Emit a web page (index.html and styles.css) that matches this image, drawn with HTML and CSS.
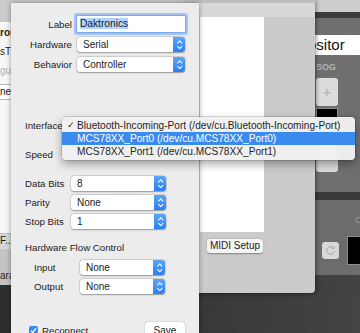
FILE: index.html
```html
<!DOCTYPE html>
<html lang="en">
<head>
<meta charset="UTF-8">
<meta name="viewport" content="width=device-width, initial-scale=1.0">
<link rel="stylesheet" href="styles.css">
<title>Serial Device</title>
</head>
<body>

<div class="desktop">

  <!-- window behind, on the left -->
  <div class="win-left">
    <div class="wl-title"></div>
    <div class="wl-body">
      <div class="wl-line bold">ron</div>
      <div class="wl-line">sTV</div>
      <div class="wl-line dim">gur</div>
      <div class="wl-line boxed">nec</div>
    </div>
    <div class="wl-status">F...</div>
    <div class="wl-foot">ara</div>
  </div>

  <!-- dark app window on the right -->
  <div class="win-right">
    <div class="wr-title"></div>
    <div class="wr-band"></div>
    <div class="wr-top">
      <div class="wr-field">Compositor</div>
      <div class="wr-col">
        <div class="wr-label">SOG</div>
        <div class="wr-btn">+</div>
        <div class="wr-black"></div>
        <div class="wr-btn tall"></div>
      </div>
    </div>
    <div class="wr-band low"></div>
    <div class="wr-bottom">
      <div class="wr-tag">C</div>
      <div class="wr-row">
        <div class="wr-refresh">
          <svg width="11" height="11" viewBox="0 0 11 11"><path d="M8.6 3.2A3.8 3.8 0 1 0 9.3 6" fill="none" stroke="#a9a9a9" stroke-width="1"/><path d="M6.8 3.4 L9 3.4 L9 1.2" fill="none" stroke="#a9a9a9" stroke-width="1"/></svg>
        </div>
        <div class="wr-screen"></div>
      </div>
    </div>
  </div>

  <!-- middle window -->
  <div class="win-mid">
    <div class="wm-top"></div>
    <div class="wm-title"></div>
    <div class="wm-body">
      <div class="wm-list"></div>
      <button class="mac-btn midi">MIDI Setup</button>
    </div>
  </div>

  <!-- the sheet -->
  <div class="sheet">
    <div class="form-top">
      <label>Label</label>
      <div class="textfield"><span class="sel">Daktronics</span></div>
      <label>Hardware</label>
      <div class="popup">Serial<span class="stepper"></span></div>
      <label>Behavior</label>
      <div class="popup">Controller<span class="stepper"></span></div>
    </div>

    <div class="form-port">
      <label>Interface</label>
      <div></div>
      <label>Speed</label>
      <div></div>
    </div>

    <div class="form-bits">
      <label>Data Bits</label>
      <div class="popup">8<span class="stepper"></span></div>
      <label>Parity</label>
      <div class="popup">None<span class="stepper"></span></div>
      <label>Stop Bits</label>
      <div class="popup">1<span class="stepper"></span></div>
    </div>

    <div class="group-title">Hardware Flow Control</div>
    <div class="form-flow">
      <label>Input</label>
      <div class="popup">None<span class="stepper"></span></div>
      <label>Output</label>
      <div class="popup">None<span class="stepper"></span></div>
    </div>

    <div class="sheet-foot">
      <div class="check-row">
        <span class="checkbox">
          <svg width="9" height="9" viewBox="0 0 9 9"><path d="M2 4.6 L3.8 6.6 L7 2.2" fill="none" stroke="#fff" stroke-width="1.3"/></svg>
        </span>
        Reconnect
      </div>
      <button class="mac-btn save">Save</button>
    </div>
  </div>

  <!-- open popup menu -->
  <div class="menu">
    <div class="menu-item"><span class="tick">&#10003;</span>Bluetooth-Incoming-Port (/dev/cu.Bluetooth-Incoming-Port)</div>
    <div class="menu-item active">MCS78XX_Port0 (/dev/cu.MCS78XX_Port0)</div>
    <div class="menu-item">MCS78XX_Port1 (/dev/cu.MCS78XX_Port1)</div>
  </div>

</div>

</body>
</html>
```

FILE: styles.css
```css
body {
  margin: 0;
  font-family: "Liberation Sans", Arial, sans-serif;
  color: #222;
}
.desktop {
  position: relative;
  width: 360px;
  height: 333px;
  overflow: hidden;
  background: linear-gradient(100deg, #2c2c2c 0%, #363636 55%, #444 100%);
}

/* left window */
.win-left {
  position: absolute;
  left: 0;
  top: 0;
  width: 190px;
  height: 285px;
  background: #c6c6c6;
}
.wl-title {
  height: 22px;
  background: #cbcbcb;
}
.wl-body {
  height: 211px;
  background: #f7f7f7;
  padding-top: 5px;
  box-sizing: border-box;
}
.wl-line {
  font-size: 10px;
  line-height: 12px;
  margin-bottom: 7px;
}
.wl-line.bold {
  font-weight: bold;
}
.wl-line.dim {
  color: #b0b0b0;
}
.wl-line.boxed {
  width: 30px;
  padding: 1px 0;
  background: #fff;
  border: 1px solid #b9b9b9;
  border-left: none;
  border-radius: 0 3px 3px 0;
}
.wl-status {
  height: 15px;
  background: #d6d6d6;
  border-top: 1px solid #bdbdbd;
  font-size: 10px;
  line-height: 14px;
}
.wl-foot {
  height: 36px;
  background: #c4c4c4;
  font-size: 10px;
  padding-top: 21px;
  box-sizing: border-box;
}

/* right window */
.win-right {
  position: absolute;
  left: 262px;
  top: 0;
  width: 120px;
  height: 275px;
  background: #707070;
}
.wr-title {
  height: 12px;
  background: #cdcdcd;
}
.wr-band {
  height: 6px;
  background: #3a3a3a;
}
.wr-band.low {
  height: 8px;
}
.wr-top {
  height: 174px;
  padding-top: 17px;
  box-sizing: border-box;
  background: #6f6f6f;
}
.wr-field {
  height: 20px;
  background: #fff;
  font-size: 15px;
  line-height: 20px;
  padding-left: 6px;
  color: #111;
}
.wr-col {
  margin-left: 54px;
  width: 22px;
}
.wr-label {
  margin-top: 7px;
  font-size: 9px;
  font-weight: bold;
  line-height: 10px;
  color: #b4b4b4;
}
.wr-btn {
  margin-top: 6px;
  height: 28px;
  background: #dcdcdc;
  border-radius: 3px;
  color: #b2b2b2;
  font-size: 15px;
  line-height: 27px;
  text-align: center;
}
.wr-btn.tall {
  margin-top: 2px;
  height: 42px;
}
.wr-black {
  margin-top: 2px;
  height: 20px;
  background: #000;
  border: 1px solid #8a8a8a;
  box-sizing: border-box;
}
.wr-bottom {
  height: 75px;
  background: #6c6c6c;
}
.wr-tag {
  margin-left: 93px;
  padding-top: 15px;
  font-size: 9px;
  line-height: 10px;
  color: #9a9a9a;
}
.wr-row {
  display: flex;
  align-items: center;
  gap: 8px;
  margin: 11px 0 0 60px;
}
.wr-refresh {
  width: 17px;
  height: 17px;
  background: #d8d8d8;
  border-radius: 3px;
  display: flex;
  align-items: center;
  justify-content: center;
}
.wr-screen {
  width: 30px;
  height: 29px;
  background: #000;
  border: 1px solid #8c8c8c;
  box-sizing: border-box;
}

/* middle window */
.win-mid {
  position: absolute;
  left: 185px;
  top: 0;
  width: 130px;
  height: 293px;
  background: #cbcbcb;
  border-radius: 0 0 4px 4px;
  box-shadow: 1px 1px 4px rgba(0, 0, 0, 0.45);
}
.wm-top {
  height: 3px;
  background: #bdbdbd;
}
.wm-title {
  height: 14px;
  background: #d8d8d8;
}
.wm-body {
  padding-left: 15px;
}
.wm-list {
  width: 64px;
  height: 215px;
  background: #fff;
}

.mac-btn {
  display: block;
  padding: 0;
  border: none;
  background: #f6f6f6;
  border-radius: 3px;
  box-shadow: 0 0.5px 1.5px rgba(0, 0, 0, 0.35);
  font-family: "Liberation Sans", Arial, sans-serif;
  font-size: 10px;
  color: #222;
}
.midi {
  margin: 7px 0 0 7px;
  width: 56px;
  height: 14px;
  line-height: 14px;
}

/* sheet */
.sheet {
  position: absolute;
  left: 11px;
  top: 3px;
  width: 188px;
  height: 340px;
  background: #ececec;
  box-shadow: 0 0 5px rgba(0, 0, 0, 0.4);
  font-size: 9.7px;
}
.sheet label {
  display: flex;
  align-items: center;
}
.form-top {
  display: grid;
  grid-template-columns: 61px 108px;
  grid-template-rows: 16px 15px 15px;
  column-gap: 5px;
  row-gap: 5px;
  padding-top: 13px;
}
.form-top label {
  justify-content: flex-end;
}
.form-port,
.form-bits,
.form-flow {
  display: grid;
  grid-template-columns: 46px 95px;
  grid-auto-rows: 15px;
  padding-left: 14px;
}
.form-port {
  margin-top: 46px;
  row-gap: 14px;
}
.form-bits {
  margin-top: 14px;
  row-gap: 4px;
}
.form-flow {
  grid-template-columns: 46px 85px;
  margin-top: 6px;
  padding-left: 23px;
  row-gap: 4px;
}
.group-title {
  margin: 13px 0 0 14px;
  line-height: 12px;
}

.textfield {
  background: #fff;
  box-shadow: 0 0 0 1px #7aaaf0, 0 0 0 3px rgba(110, 160, 240, 0.55);
  border-radius: 1px;
  font-size: 10.2px;
  line-height: 16px;
  padding-left: 3px;
}
.sel {
  background: #b3d4fc;
}
.popup {
  position: relative;
  background: #fff;
  border-radius: 3px;
  box-shadow: 0 0 0 0.5px rgba(0, 0, 0, 0.15), 0 0.5px 1.5px rgba(0, 0, 0, 0.3);
  font-size: 10px;
  line-height: 15px;
  padding-left: 6px;
}
.stepper {
  position: absolute;
  right: 0;
  top: 0;
  width: 12px;
  height: 100%;
  border-radius: 0 3px 3px 0;
  background: linear-gradient(#5ca6f8, #2c7ef0);
}
.stepper::before,
.stepper::after {
  content: "";
  position: absolute;
  left: 4.5px;
  width: 2.5px;
  height: 2.5px;
  border-left: 1px solid #fff;
  border-top: 1px solid #fff;
}
.stepper::before {
  top: 4px;
  transform: rotate(45deg);
}
.stepper::after {
  top: 7.5px;
  transform: rotate(225deg);
}

.sheet-foot {
  display: flex;
  justify-content: space-between;
  align-items: flex-start;
  width: 156px;
  margin: 28px 0 0 18px;
}
.check-row {
  display: flex;
  align-items: center;
  gap: 4px;
  margin-top: 3px;
  font-size: 9.7px;
}
.checkbox {
  width: 9px;
  height: 9px;
  border-radius: 2px;
  background: #3b8bef;
  display: flex;
}
.save {
  width: 40px;
  height: 17px;
  background: #fff;
  border-radius: 4px;
  font-size: 10px;
}

/* open menu */
.menu {
  position: absolute;
  left: 62px;
  top: 117px;
  width: 293px;
  padding: 2px 0;
  background: rgba(240, 240, 240, 0.98);
  border-radius: 4px;
  box-shadow: 0 0 0 0.5px rgba(0, 0, 0, 0.25), 0 4px 10px rgba(0, 0, 0, 0.35);
  font-size: 10.15px;
}
.menu-item {
  position: relative;
  height: 13px;
  line-height: 13px;
  padding-left: 15px;
  color: #1e1e1e;
}
.menu-item.active {
  background: #3b8bef;
  color: #fff;
}
.tick {
  position: absolute;
  left: 5px;
  font-size: 9px;
}
```
